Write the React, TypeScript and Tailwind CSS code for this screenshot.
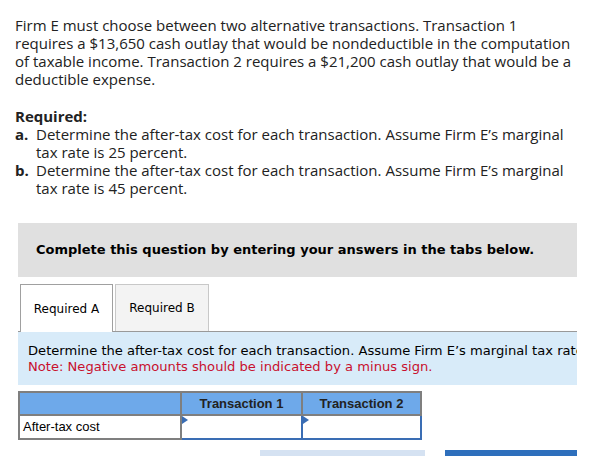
import React from "react";

function InputCell() {
  return (
    <td className="relative h-[24px] border-2 border-[#3a6db4] bg-white p-0">
      <span className="absolute left-0 top-0 h-0 w-0 border-b-[4px] border-l-[6px] border-t-[4px] border-b-transparent border-l-[#3a6db4] border-t-transparent" />
    </td>
  );
}

export default function App() {
  return (
    <div className="h-[456px] w-[614px] overflow-hidden bg-white text-[#222]">
      <div className="w-[574px] pl-[15px] pt-[16px] font-['Open_Sans',sans-serif] text-[15px] leading-[18px]">
        <p>
          Firm E must choose between two alternative transactions. Transaction 1 requires a $13,650 cash outlay that would be nondeductible in the computation of taxable income. Transaction 2 requires a $21,200 cash outlay that would be a deductible expense.
        </p>
        <p className="mt-[19px] font-bold">Required:</p>
        <div className="flex">
          <span className="w-[21px] shrink-0 font-bold">a.</span>
          <span className="flex-1">Determine the after-tax cost for each transaction. Assume Firm E’s marginal tax rate is 25 percent.</span>
        </div>
        <div className="flex">
          <span className="w-[21px] shrink-0 font-bold">b.</span>
          <span className="flex-1">Determine the after-tax cost for each transaction. Assume Firm E’s marginal tax rate is 45 percent.</span>
        </div>
      </div>

      <div className="ml-[18px] mt-[26px] w-[559px]">
        <div className="flex h-[54px] items-center bg-[#e0e0e0] pl-[18px] font-['DejaVu_Sans',sans-serif] text-[13px] font-bold text-black">
          Complete this question by entering your answers in the tabs below.
        </div>

        <div className="mt-[7px] flex items-end pl-[2px] font-['DejaVu_Sans',sans-serif] text-[12px] text-black">
          <div className="relative z-10 -mb-px flex h-[48px] w-[93px] items-center justify-center border border-b-0 border-[#a0a0a0] bg-white">
            Required A
          </div>
          <div className="ml-[2px] flex h-[47px] w-[94px] items-center justify-center border border-b-0 border-[#c8c8c8] bg-[#f3f3f3]">
            Required B
          </div>
        </div>

        <div className="overflow-hidden border-t border-[#999] bg-[#d8ebf9] px-[10px] pb-[10px] pt-[11px] font-['DejaVu_Sans',sans-serif] text-[13.1px] leading-[16px]">
          <div className="whitespace-nowrap text-black">Determine the after-tax cost for each transaction. Assume Firm E’s marginal tax rate is 25 percent.</div>
          <div className="text-[#c8102e]">Note: Negative amounts should be indicated by a minus sign.</div>
        </div>

        <table className="mt-[6px] w-[404px] border-collapse font-['Liberation_Sans',sans-serif] text-[13px]">
          <thead>
            <tr className="h-[23px] bg-[#6ea9ea]">
              <th className="w-[162px] border-2 border-[#7f7f7f]" />
              <th className="w-[121px] border-2 border-[#7f7f7f] text-center font-bold text-[#222]">Transaction 1</th>
              <th className="border-2 border-[#7f7f7f] text-center font-bold text-[#222]">Transaction 2</th>
            </tr>
          </thead>
          <tbody>
            <tr>
              <td className="h-[24px] border-2 border-[#7f7f7f] pl-[3px] text-left text-black">After-tax cost</td>
              <InputCell />
              <InputCell />
            </tr>
          </tbody>
        </table>

        <div className="mt-[10px] flex">
          <div className="ml-[242px] h-[12px] w-[165px] bg-[#d5e2f2]" />
          <div className="ml-[20px] h-[12px] w-[132px] bg-[#2e6fbc]" />
        </div>
      </div>
    </div>
  );
}
